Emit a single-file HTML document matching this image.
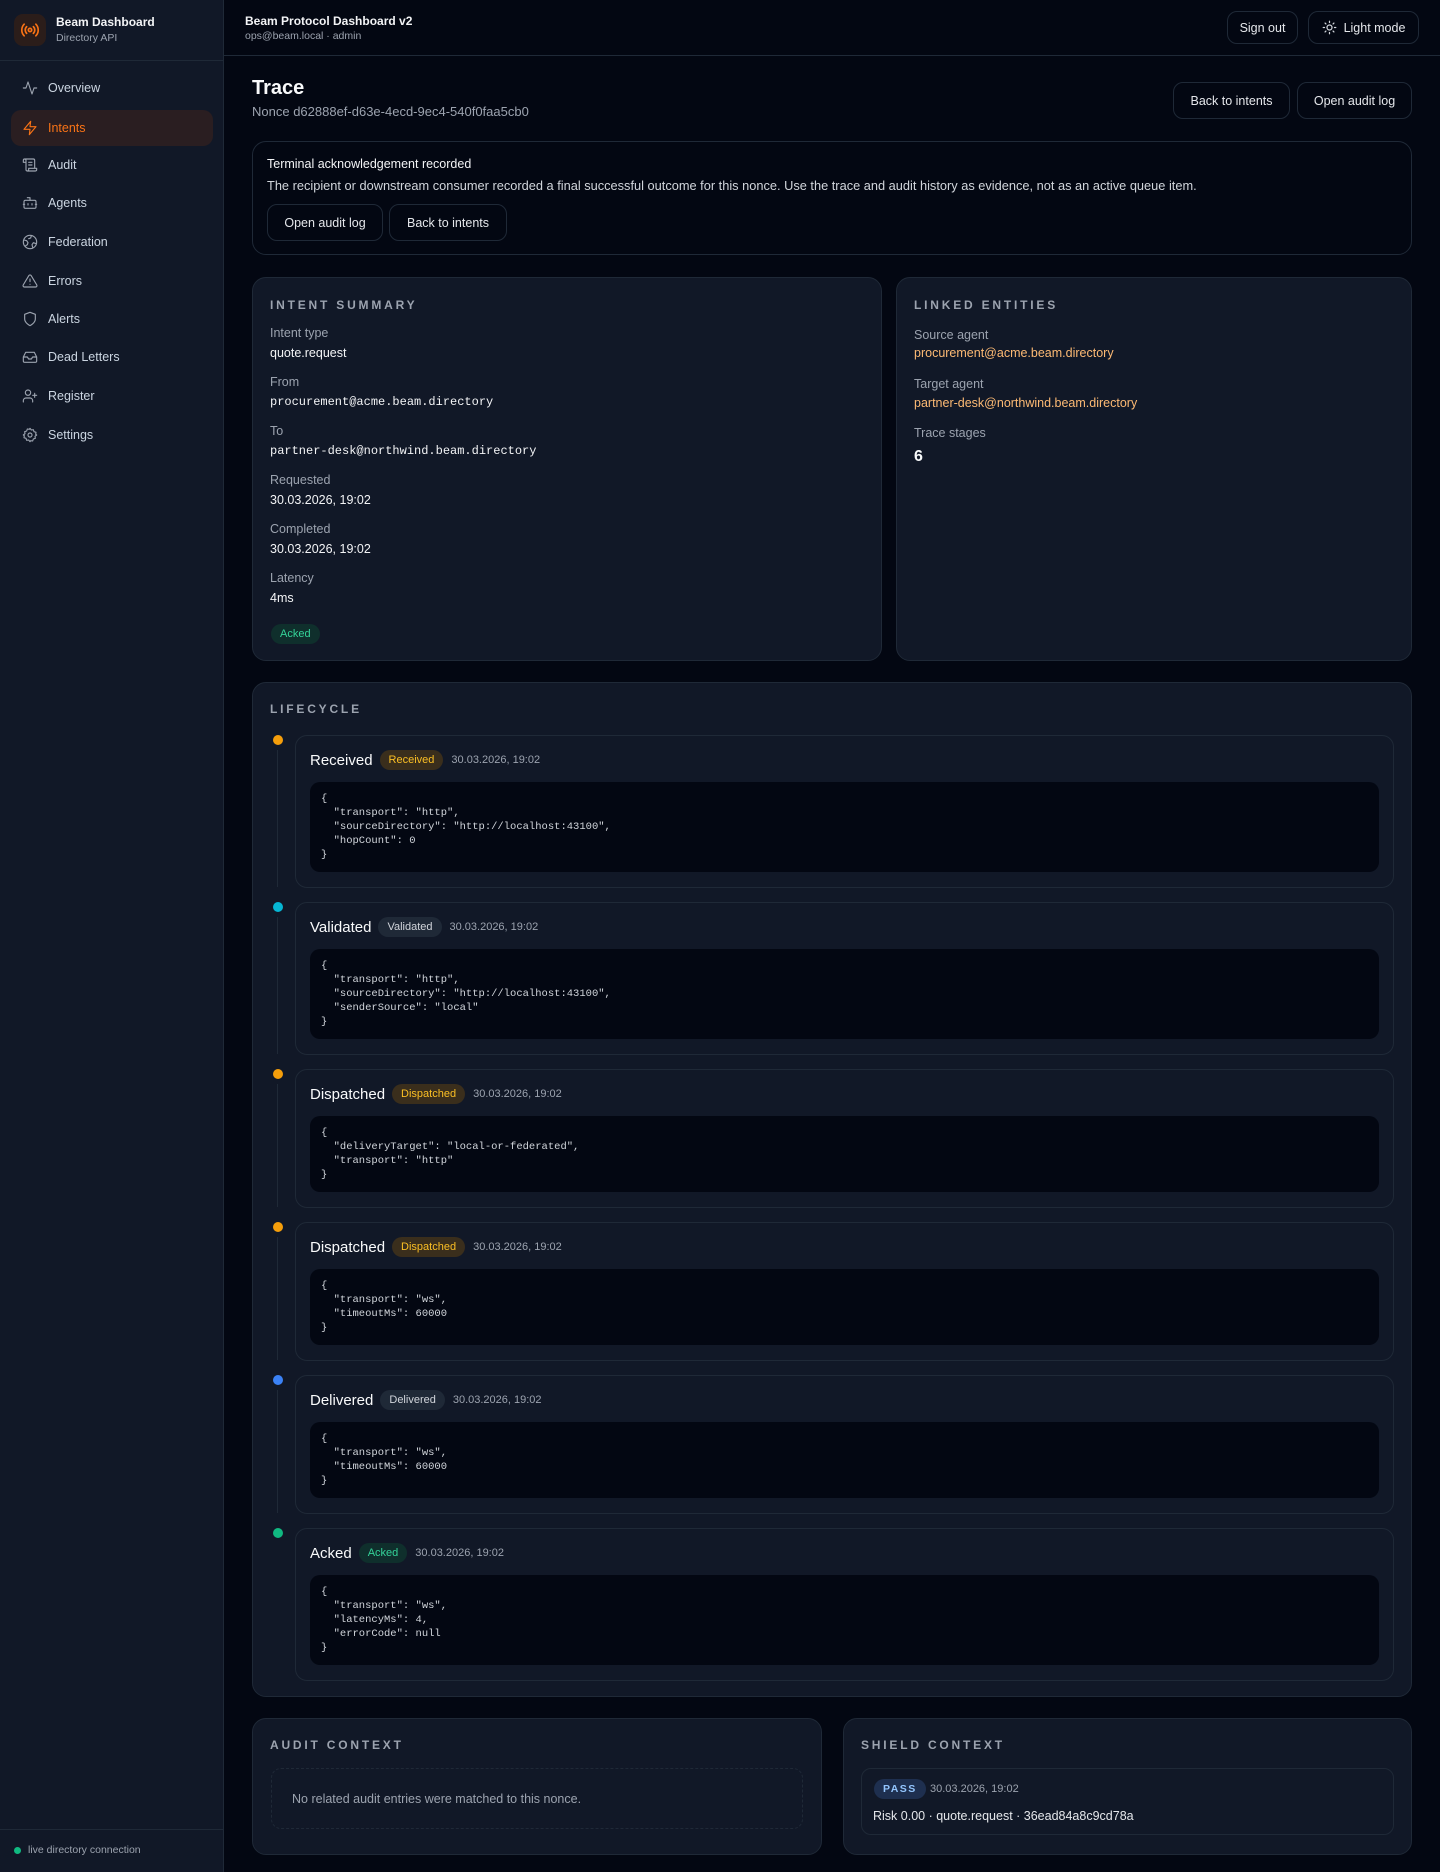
<!DOCTYPE html>
<html><head><meta charset="utf-8"><style>
*{box-sizing:border-box;margin:0;padding:0}
body{width:1440px;height:1872px;background:#030712;font-family:"Liberation Sans",sans-serif;color:#e5e7eb;position:relative;overflow:hidden;font-size:13px}
.abs{position:absolute}
.side{left:0;top:0;width:224px;height:1872px;background:#111827;border-right:1px solid #1f2937}
.logo{left:14px;top:14px;width:32px;height:32px;border-radius:9px;background:#2b1d1a;display:flex;align-items:center;justify-content:center}
.nav{left:11px;width:202px;height:36px;border-radius:10px;display:flex;align-items:center;padding-left:11px;font-size:12.5px;color:#cbd5e1}
.nav svg{width:16px;height:16px;margin-right:10px;fill:none;stroke:#9ca3af;stroke-width:1.7;stroke-linecap:round;stroke-linejoin:round}
.nav.act{background:#2a1e21;color:#f97316}.nav.act svg{stroke:#f97316}
.btn{position:absolute;border:1px solid #1f2937;border-radius:10px;display:flex;align-items:center;justify-content:center;font-size:12.5px;color:#e5e7eb;background:#030712}
.card{position:absolute;background:#111827;border:1px solid #1f2937;border-radius:14px}
.h{font-size:12px;font-weight:bold;letter-spacing:2.8px;color:#9ca3af}
.lbl{font-size:12.5px;color:#9ca3af}
.val{font-size:12.5px;color:#f3f4f6}
.mono{font-family:"Liberation Mono",monospace;font-size:12px}
.badge{display:inline-block;font-size:11px;padding:4px 9px;border-radius:10px}
.stage{position:relative;background:#111827;border:1px solid #1f2937;border-radius:12px;padding:14px 14px 15px 14px}
.st{display:flex;align-items:center;height:20px;margin-bottom:12px}
.st b{font-size:15px;font-weight:normal;color:#f9fafb;margin-right:7px}
.st .t{font-size:11px;color:#9ca3af;margin-left:8px}
pre{background:#030712;border-radius:10px;padding:10px 11px;font-family:"Liberation Mono",monospace;font-size:10.5px;line-height:14px;color:#d1d5db}
.dot{position:absolute;left:-23px;top:-1px;width:10px;height:10px;border-radius:50%}
.ln{position:absolute;left:-19px;top:14px;bottom:0;width:1px;background:#1f2937}
</style></head><body>
<div class="abs side"></div>
<div class="abs logo"><svg width="20" height="20" viewBox="0 0 24 24" fill="none" stroke="#f97316" stroke-width="2" stroke-linecap="round"><circle cx="12" cy="12" r="2"/><path d="M8 8a5.5 5.5 0 0 0 0 8M16 8a5.5 5.5 0 0 1 0 8M5 5a10 10 0 0 0 0 14M19 5a10 10 0 0 1 0 14"/></svg></div>
<div class="abs" style="left:56px;top:15px;font-size:12px;font-weight:bold;color:#f3f4f6">Beam Dashboard</div>
<div class="abs" style="left:56px;top:32px;font-size:10.5px;color:#9ca3af">Directory API</div>
<div class="abs" style="left:0;top:60px;width:224px;height:1px;background:#1f2937"></div>

<div class="abs nav" style="top:70px"><svg viewBox="0 0 24 24"><path d="M22 12h-4l-3 9L9 3l-3 9H2"/></svg>Overview</div>
<div class="abs nav act" style="top:110px"><svg viewBox="0 0 24 24"><path d="M13 2 3 14h9l-1 8 10-12h-9l1-8z"/></svg>Intents</div>
<div class="abs nav" style="top:147px"><svg viewBox="0 0 24 24"><path d="M8 21h12a2 2 0 0 0 2-2v-2H10v2a2 2 0 1 1-4 0V5a2 2 0 1 0-4 0v3h4M19 17V5a2 2 0 0 0-2-2H4M15 8h-5M15 12h-5"/></svg>Audit</div>
<div class="abs nav" style="top:185px"><svg viewBox="0 0 24 24"><rect x="3" y="8" width="18" height="12" rx="2"/><path d="M12 8V4H8M2 14h2M20 14h2M9 13v2M15 13v2"/></svg>Agents</div>
<div class="abs nav" style="top:224px"><svg viewBox="0 0 24 24"><circle cx="12" cy="12" r="10"/><path d="M21.5 14.5 17 13l-2 3 1 4M3 9l4 1 2 3-1 3-3 2M14 2.5 13 6l-3 1"/></svg>Federation</div>
<div class="abs nav" style="top:263px"><svg viewBox="0 0 24 24"><path d="M10.3 3.9 1.8 18a2 2 0 0 0 1.7 3h17a2 2 0 0 0 1.7-3L13.7 3.9a2 2 0 0 0-3.4 0zM12 9v4M12 17h.01"/></svg>Errors</div>
<div class="abs nav" style="top:301px"><svg viewBox="0 0 24 24"><path d="M12 22s8-4 8-10V5l-8-3-8 3v7c0 6 8 10 8 10z"/></svg>Alerts</div>
<div class="abs nav" style="top:339px"><svg viewBox="0 0 24 24"><path d="M22 12h-6l-2 3h-4l-2-3H2M5.5 5h13L22 12v6a2 2 0 0 1-2 2H4a2 2 0 0 1-2-2v-6z"/></svg>Dead Letters</div>
<div class="abs nav" style="top:378px"><svg viewBox="0 0 24 24"><circle cx="9" cy="7" r="4"/><path d="M2 21v-2a4 4 0 0 1 4-4h6a4 4 0 0 1 4 4v2M19 8v6M22 11h-6"/></svg>Register</div>
<div class="abs nav" style="top:417px"><svg viewBox="0 0 24 24"><circle cx="12" cy="12" r="3"/><path d="M12 2l2 2.5 3-.5 1 3 3 1-.5 3L22 12l-2.5 2 .5 3-3 1-1 3-3-.5L12 22l-2-2.5-3 .5-1-3-3-1 .5-3L2 12l2.5-2L4 7l3-1 1-3 3 .5z"/></svg>Settings</div>

<div class="abs" style="left:0;top:1829px;width:224px;height:1px;background:#1f2937"></div>
<div class="abs" style="left:14px;top:1847px;width:7px;height:7px;border-radius:50%;background:#10b981"></div>
<div class="abs" style="left:28px;top:1844px;font-size:10.5px;color:#9ca3af">live directory connection</div>

<!-- topbar -->
<div class="abs" style="left:224px;top:55px;width:1216px;height:1px;background:#1f2937"></div>
<div class="abs" style="left:245px;top:14px;font-size:12px;font-weight:bold;color:#f3f4f6">Beam Protocol Dashboard v2</div>
<div class="abs" style="left:245px;top:30px;font-size:10.5px;color:#9ca3af">ops@beam.local · admin</div>
<div class="btn" style="left:1227px;top:11px;width:71px;height:33px">Sign out</div>
<div class="btn" style="left:1308px;top:11px;width:111px;height:33px"><svg width="15" height="15" viewBox="0 0 24 24" fill="none" stroke="#d1d5db" stroke-width="2" stroke-linecap="round" style="margin-right:7px"><circle cx="12" cy="12" r="4"/><path d="M12 2v2M12 20v2M4.9 4.9l1.4 1.4M17.7 17.7l1.4 1.4M2 12h2M20 12h2M6.3 17.7l-1.4 1.4M19.1 4.9l-1.4 1.4"/></svg>Light mode</div>

<!-- title -->
<div class="abs" style="left:252px;top:77px;font-size:20px;font-weight:bold;color:#f9fafb">Trace</div>
<div class="abs" style="left:252px;top:104px;font-size:13px;color:#9ca3af">Nonce d62888ef-d63e-4ecd-9ec4-540f0faa5cb0</div>
<div class="btn" style="left:1173px;top:82px;width:117px;height:37px">Back to intents</div>
<div class="btn" style="left:1297px;top:82px;width:115px;height:37px">Open audit log</div>

<div class="abs" style="left:252px;top:141px;width:1160px;height:114px;border:1px solid #1f2937;border-radius:14px"></div>
<div class="abs" style="left:267px;top:157px;font-size:12.5px;color:#f3f4f6">Terminal acknowledgement recorded</div>
<div class="abs" style="left:267px;top:178px;font-size:12.8px;color:#d1d5db">The recipient or downstream consumer recorded a final successful outcome for this nonce. Use the trace and audit history as evidence, not as an active queue item.</div>
<div class="btn" style="left:267px;top:204px;width:116px;height:37px">Open audit log</div>
<div class="btn" style="left:389px;top:204px;width:118px;height:37px">Back to intents</div>

<!-- intent summary -->
<div class="card" style="left:252px;top:277px;width:630px;height:384px"></div>
<div class="abs h" style="left:270px;top:298px">INTENT SUMMARY</div>
<div class="abs lbl" style="left:270px;top:326px">Intent type</div><div class="abs val" style="left:270px;top:346px">quote.request</div>
<div class="abs lbl" style="left:270px;top:375px">From</div><div class="abs val mono" style="left:270px;top:395px">procurement@acme.beam.directory</div>
<div class="abs lbl" style="left:270px;top:424px">To</div><div class="abs val mono" style="left:270px;top:444px">partner-desk@northwind.beam.directory</div>
<div class="abs lbl" style="left:270px;top:473px">Requested</div><div class="abs val" style="left:270px;top:493px">30.03.2026, 19:02</div>
<div class="abs lbl" style="left:270px;top:522px">Completed</div><div class="abs val" style="left:270px;top:542px">30.03.2026, 19:02</div>
<div class="abs lbl" style="left:270px;top:571px">Latency</div><div class="abs val" style="left:270px;top:591px">4ms</div>
<div class="abs badge" style="left:271px;top:624px;background:#0f2f2c;color:#34d399">Acked</div>

<div class="card" style="left:896px;top:277px;width:516px;height:384px"></div>
<div class="abs h" style="left:914px;top:298px">LINKED ENTITIES</div>
<div class="abs lbl" style="left:914px;top:328px">Source agent</div><div class="abs" style="left:914px;top:346px;font-size:12.5px;color:#fdba74">procurement@acme.beam.directory</div>
<div class="abs lbl" style="left:914px;top:377px">Target agent</div><div class="abs" style="left:914px;top:396px;font-size:12.5px;color:#fdba74">partner-desk@northwind.beam.directory</div>
<div class="abs lbl" style="left:914px;top:426px">Trace stages</div><div class="abs" style="left:914px;top:448px;font-size:16px;font-weight:bold;color:#f9fafb">6</div>

<!-- lifecycle -->
<div class="card" style="left:252px;top:682px;width:1160px;height:1015px"></div>
<div class="abs h" style="left:270px;top:702px">LIFECYCLE</div>
<div class="abs" style="left:295px;top:735px;width:1099px;display:flex;flex-direction:column;gap:14px">
<div class="stage"><div class="dot" style="background:#f59e0b"></div><div class="ln"></div><div class="st"><b>Received</b><span class="badge" style="background:#3a2e1c;color:#fbbf24">Received</span><span class="t">30.03.2026, 19:02</span></div><pre>{
  "transport": "http",
  "sourceDirectory": "http://localhost:43100",
  "hopCount": 0
}</pre></div>
<div class="stage"><div class="dot" style="background:#06b6d4"></div><div class="ln"></div><div class="st"><b>Validated</b><span class="badge" style="background:#1f2937;color:#d1d5db">Validated</span><span class="t">30.03.2026, 19:02</span></div><pre>{
  "transport": "http",
  "sourceDirectory": "http://localhost:43100",
  "senderSource": "local"
}</pre></div>
<div class="stage"><div class="dot" style="background:#f59e0b"></div><div class="ln"></div><div class="st"><b>Dispatched</b><span class="badge" style="background:#3a2e1c;color:#fbbf24">Dispatched</span><span class="t">30.03.2026, 19:02</span></div><pre>{
  "deliveryTarget": "local-or-federated",
  "transport": "http"
}</pre></div>
<div class="stage"><div class="dot" style="background:#f59e0b"></div><div class="ln"></div><div class="st"><b>Dispatched</b><span class="badge" style="background:#3a2e1c;color:#fbbf24">Dispatched</span><span class="t">30.03.2026, 19:02</span></div><pre>{
  "transport": "ws",
  "timeoutMs": 60000
}</pre></div>
<div class="stage"><div class="dot" style="background:#3b82f6"></div><div class="ln"></div><div class="st"><b>Delivered</b><span class="badge" style="background:#1f2937;color:#d1d5db">Delivered</span><span class="t">30.03.2026, 19:02</span></div><pre>{
  "transport": "ws",
  "timeoutMs": 60000
}</pre></div>
<div class="stage"><div class="dot" style="background:#10b981"></div><div class="st"><b>Acked</b><span class="badge" style="background:#0f2f2c;color:#34d399">Acked</span><span class="t">30.03.2026, 19:02</span></div><pre>{
  "transport": "ws",
  "latencyMs": 4,
  "errorCode": null
}</pre></div>
</div>

<!-- bottom -->
<div class="card" style="left:252px;top:1718px;width:570px;height:137px"></div>
<div class="abs h" style="left:270px;top:1738px">AUDIT CONTEXT</div>
<div class="abs" style="left:271px;top:1768px;width:532px;height:61px;border:1px dashed #1f2937;border-radius:10px"></div>
<div class="abs" style="left:292px;top:1792px;font-size:12.5px;color:#9ca3af">No related audit entries were matched to this nonce.</div>

<div class="card" style="left:843px;top:1718px;width:569px;height:137px"></div>
<div class="abs h" style="left:861px;top:1738px">SHIELD CONTEXT</div>
<div class="abs" style="left:861px;top:1768px;width:533px;height:67px;border:1px solid #1f2937;border-radius:10px"></div>
<div class="abs badge" style="left:874px;top:1779px;background:#1e2f4f;color:#93c5fd;letter-spacing:1.5px;font-weight:bold;font-size:10.5px">PASS</div>
<div class="abs" style="left:930px;top:1783px;font-size:11px;color:#9ca3af">30.03.2026, 19:02</div>
<div class="abs" style="left:873px;top:1809px;font-size:12.5px;color:#e5e7eb">Risk 0.00 · quote.request · 36ead84a8c9cd78a</div>
</body></html>
